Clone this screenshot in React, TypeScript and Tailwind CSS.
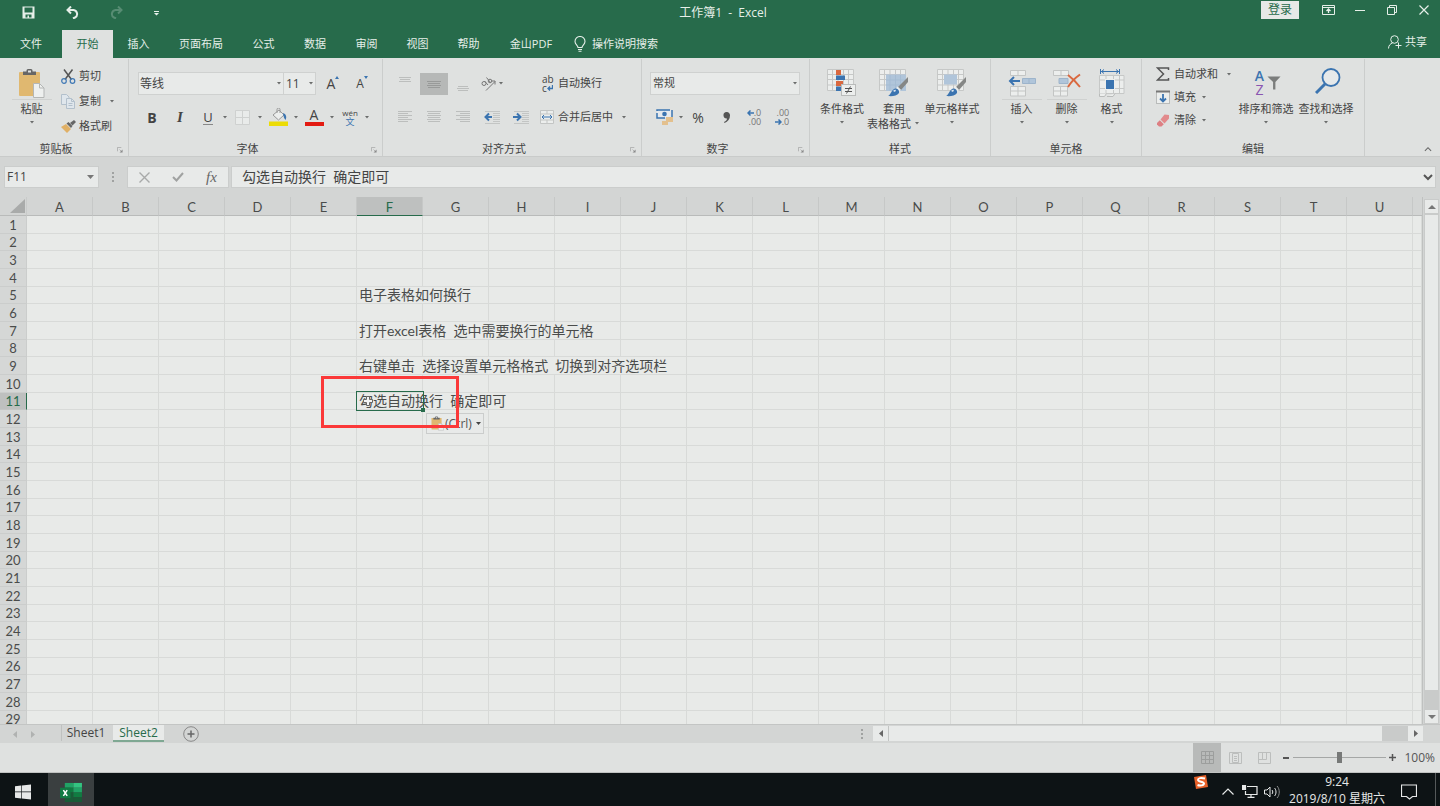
import { useState, type ReactNode } from 'react';
import clsx from 'clsx';

const menuTabs = [
  { label: '文件', width: 'w-[62px]' },
  { label: '开始', width: 'w-[51px]' },
  { label: '插入', width: 'w-[51px]' },
  { label: '页面布局', width: 'w-[74px]' },
  { label: '公式', width: 'w-[51px]' },
  { label: '数据', width: 'w-[52px]' },
  { label: '审阅', width: 'w-[51px]' },
  { label: '视图', width: 'w-[51px]' },
  { label: '帮助', width: 'w-[51px]' },
  { label: '金山PDF', width: 'w-[74px]' },
];

const columns = 'ABCDEFGHIJKLMNOPQRSTU'.split('');
const rows = Array.from({ length: 29 }, (_, i) => i + 1);

// Text runs over the empty neighbours, so each entry says how many columns it covers
const cells: { [key: string]: { text: string; span: number } } = {
  F5: { text: '电子表格如何换行', span: 2 },
  F7: { text: '打开excel表格  选中需要换行的单元格', span: 4 },
  F9: { text: '右键单击  选择设置单元格格式  切换到对齐选项栏', span: 5 },
  F11: { text: '勾选自动换行  确定即可', span: 3 },
};

/* ---------- small shared pieces ---------- */

function Caret({ className = 'w-2' }: { className?: string }) {
  return (
    <span className={clsx('flex shrink-0 justify-center', className)}>
      <svg width="4" height="3" viewBox="0 0 4 3" fill="#6a6c6b">
        <path d="M0 0h4L2 2.4z" />
      </svg>
    </span>
  );
}

function ToolButton({ label, active, children }: { label: string; active?: boolean; children: ReactNode }) {
  return (
    <button
      aria-label={label}
      className={clsx('flex h-[22px] w-7 shrink-0 items-center justify-center', active && 'bg-[#b6b8b7]')}
    >
      {children}
    </button>
  );
}

function TextButton({ icon, label, caret }: { icon: ReactNode; label: string; caret?: string }) {
  return (
    <button className="flex h-[22px] items-center whitespace-nowrap">
      <span className="flex w-[18px] shrink-0">{icon}</span>
      <span>{label}</span>
      {caret && <Caret className={caret} />}
    </button>
  );
}

function BigButton({ icon, lines, width, split, sideCaret }: {
  icon: ReactNode;
  lines: string[];
  width: string;
  split?: boolean;
  sideCaret?: boolean;
}) {
  return (
    <button className={clsx('flex shrink-0 flex-col items-center whitespace-nowrap pt-2', width)}>
      <span className="flex h-8 items-center justify-center">{icon}</span>
      <span className={clsx('mb-px h-px w-10', split && 'bg-[#cfd1d0]')} />
      {lines.map((line, i) => (
        <span key={line} className="flex h-[15px] items-center leading-[15px]">
          {line}
          {sideCaret && i === 1 && <Caret className="ml-[2px] w-2" />}
        </span>
      ))}
      {!sideCaret && <Caret className="mt-[5px] w-2" />}
    </button>
  );
}

function Group({ title, width, launcher, children }: {
  title: string;
  width: string;
  launcher?: boolean;
  children: ReactNode;
}) {
  return (
    <section className={clsx('flex shrink-0 flex-col border-r border-[#cbcdcc]', width)}>
      <div className="flex-1">{children}</div>
      <div className="flex h-[14px] items-center">
        <span className="flex-1 text-center leading-4">{title}</span>
        {launcher && (
          <button aria-label={`${title}设置`} className="flex w-4 justify-center pt-px">
            <svg width="6" height="6" viewBox="0 0 7 7" fill="none" stroke="#aaa">
              <path d="M0.5 5V0.5H5M3 3l2.5 2.5" />
              <path d="M6.5 3v3.5H3z" fill="#888" stroke="none" />
            </svg>
          </button>
        )}
      </div>
    </section>
  );
}

/* ---------- icons ---------- */

function PasteIcon({ size = 27 }: { size?: number }) {
  return (
    <svg width={size} height={size + 2} viewBox="0 0 27 29">
      <rect x="1" y="3" width="21" height="24" rx="1" fill="#e0b870" />
      <path d="M5 2.5h3.5V1.5a1.5 1.5 0 0 1 1.5-1.5h3a1.5 1.5 0 0 1 1.5 1.5v1H18V6H5z" fill="#666" />
      <rect x="10" y="1.5" width="3" height="2" fill="#dfe1e0" />
      <path d="M15.5 14.5h6l4.5 4.5v9.5H15.5z" fill="#eef0ef" stroke="#b4b6b5" />
      <path d="M21.5 14.5V19H26" fill="none" stroke="#b4b6b5" />
    </svg>
  );
}

const scissors = (
  <svg width="15" height="15" viewBox="0 0 15 15" fill="none">
    <path d="M3 0.5l7.5 10M11.5 0.5L4 10.5" stroke="#555" strokeWidth="1.5" />
    <circle cx="3" cy="12" r="2.3" stroke="#4179b5" strokeWidth="1.2" />
    <circle cx="11.5" cy="12" r="2.3" stroke="#4179b5" strokeWidth="1.2" />
  </svg>
);

const copy = (
  <svg width="14" height="15" viewBox="0 0 14 15" fill="#dfe6ec" stroke="#b3c0cc">
    <path d="M0.5 0.5h5l2.5 2.5v7.5h-7.5z" />
    <path d="M5.5 4.5h5l3 3v7h-8z" />
    <path d="M10.5 4.5v3h3M7.5 9.5h4M7.5 11.5h4" fill="none" />
  </svg>
);

const brush = (
  <svg width="15" height="13" viewBox="0 0 15 13">
    <path d="M0 7l5-3 5 5-4 4z" fill="#e0b066" />
    <path d="M5.5 3.5L7.5 2l4 4-1.5 2z" fill="#666" />
    <path d="M9 3l4-3 2 2-3.5 3.5z" fill="#666" />
  </svg>
);

const gridPath = 'M0.5 0.5h26v21h-26zM0.5 5.5h26M0.5 10.5h26M0.5 16h26M5.5 0.5v21M11 0.5v21M16.5 0.5v21M21.5 0.5v21';

const conditional = (
  <svg width="30" height="28" viewBox="0 0 30 28">
    <path d={gridPath} fill="#eceeed" stroke="#c6c8c7" />
    <path d="M9 1h5v5H9zM9 12h7v5H9z" fill="#d9683f" />
    <path d="M9 6.5h9V11H9zM9 17.5h5V22H9z" fill="#3b74b0" />
    <rect x="14.5" y="15.5" width="14" height="11" fill="#eceeed" stroke="#b9bbba" />
    <path d="M18 19.5h7M18 22.5h7M23.5 17.5l-4 7" stroke="#555" fill="none" />
  </svg>
);

function BrushTip() {
  return (
    <>
      <path d="M29 8v5l-7 8-3-3z" fill="#858786" />
      <path d="M18.5 17.5l3.5 3.5-2 1.500-3-3z" fill="#eceeed" />
      <path d="M9 27c3-1 3-6 7-7.5 3 0 4.500 2 4 4.500-2 3-7 3.500-11 3z" fill="#3b74b0" />
      <path d="M14 22c1-1 2-1.500 3-1l-1 2z" fill="#dce6ef" />
    </>
  );
}

const tableStyle = (
  <svg width="30" height="28" viewBox="0 0 30 28">
    <path d={gridPath} fill="#eceeed" stroke="#c6c8c7" />
    <path d="M7 5.5h20V22H7z" fill="#b0c5da" />
    <path d="M7 11h19M7 16h19M11 6v16M16.5 6v16M21.5 6v16" stroke="#a5bcd3" />
    <BrushTip />
  </svg>
);

const cellStyle = (
  <svg width="30" height="28" viewBox="0 0 30 28">
    <path d={gridPath} fill="#eceeed" stroke="#c6c8c7" />
    <path d="M7 5.5h13v10H7z" fill="#b0c5da" />
    <BrushTip />
  </svg>
);

const insertCells = (
  <svg width="28" height="27" viewBox="0 0 28 27">
    <path d="M2.5 0.5h15v5h-15zM10 0.5v5M2.5 16.5h15v9.5h-15zM10 16.5v9.5M2.5 21h15" fill="#eceeed" stroke="#c3c5c4" />
    <path d="M14.5 8.5h13v5h-13zM21 8.5v5" fill="#b0c5da" stroke="#9db4cb" />
    <path d="M12 11H2.5M6 7l-4 4 4 4" fill="none" stroke="#3b74b0" strokeWidth="2" />
  </svg>
);

const deleteCells = (
  <svg width="28" height="27" viewBox="0 0 28 27">
    <path d="M0.5 0.5h15v5h-15zM8 0.5v5M0.5 16.5h14v9.5h-14zM7.5 16.5v9.5M0.5 21h14" fill="#eceeed" stroke="#c3c5c4" />
    <path d="M6 8.5h9v5H6z" fill="#b0c5da" stroke="#9db4cb" />
    <path d="M15 5c4 3 8 7 12 12M27 4.5C22 8 18 12 15 17" fill="none" stroke="#d9683f" strokeWidth="2" />
  </svg>
);

const formatCells = (
  <svg width="26" height="29" viewBox="0 0 26 29">
    <path d="M2 2.5h18M5 0.5L2.500 2.5 5 4.5M17 0.5l2.500 2L17 4.5M1.5 0v5M20.5 0v5" fill="none" stroke="#3b74b0" />
    <path d="M0.5 6.5h24.5v18H0.5zM0.5 11h24.5M0.5 19.5h24.5M7 6.5v18M14.500 6.5v18M20.5 6.5v18" fill="#eceeed" stroke="#c6c8c7" />
    <path d="M0.5 24.5v3h5l2-3M8 27.5h6l2-3" fill="#eceeed" stroke="#b9bbba" />
    <rect x="6" y="10" width="10" height="11" fill="#eceeed" />
    <rect x="7" y="11" width="8" height="9" fill="#3b74b0" />
  </svg>
);

const sortFilter = (
  <span className="flex items-center pl-1">
    <span className="flex flex-col items-center text-[14px] leading-[14px]">
      <span className="font-semibold text-[#3b74b0]">A</span>
      <span className="text-[#8a55b0]">Z</span>
    </span>
    <svg width="14" height="14" viewBox="0 0 15 14" className="ml-[3px]" fill="#7b7d7c">
      <path d="M0.5 0h14L9 6v8H6.5V6z" />
    </svg>
  </span>
);

const magnifier = (
  <svg width="26" height="26" viewBox="0 0 26 26" fill="none" stroke="#3b74b0" className="mb-1 ml-1">
    <circle cx="16" cy="9.5" r="8.5" strokeWidth="1.8" fill="#e6e9ea" />
    <path d="M10 16l-9 9" strokeWidth="3" />
  </svg>
);

// Horizontal strokes two pixels apart, given as [x1, x2] per line
function AlignIcon({ lines, top = 2, color = '#bcbebd' }: { lines: number[][]; top?: number; color?: string }) {
  return (
    <svg width="14" height="14" viewBox="0 0 14 14" stroke={color}>
      {lines.map(([a, b], i) => (
        <path key={i} d={`M${a} ${top + i * 2 - 0.5}H${b}`} />
      ))}
    </svg>
  );
}

function IndentIcon({ right }: { right?: boolean }) {
  return (
    <svg width="17" height="14" viewBox="0 0 17 14" fill="none">
      <path d="M1 1.5h15M9 3.5h7M9 5.5h7M9 7.5h7M9 9.5h7M9 11.500h7M1 13.5h15" stroke="#c3c5c4" />
      <path d={right ? 'M0 7h7M4 3.500l3.500 3.500-3.500 3.500' : 'M8 7H1.500M5 3.500L1.500 7l3.500 3.500'} stroke="#3b74b0" strokeWidth="2" />
    </svg>
  );
}

function DecimalIcon({ more }: { more?: boolean }) {
  return (
    <span className="flex flex-col text-[9px] leading-[9px] text-[#777]">
      <span className="flex items-center justify-end">
        {more ? '.00' : (
          <>
            <svg width="7" height="6" viewBox="0 0 7 6" fill="none" stroke="#3b74b0" strokeWidth="1.5"><path d="M7 3H1M3.5 0.5L1 3l2.500 2.500" /></svg>
            .0
          </>
        )}
      </span>
      <span className="flex items-center justify-end">
        {more ? (
          <>
            <svg width="7" height="6" viewBox="0 0 7 6" fill="none" stroke="#3b74b0" strokeWidth="1.5"><path d="M0 3h6M3.5 0.5L6 3 3.500 5.500" /></svg>
            .0
          </>
        ) : '.00'}
      </span>
    </span>
  );
}

/* ---------- header ---------- */

function TitleBar() {
  return (
    <header className="flex h-[30px] items-start text-[#e6efe9]">
      <div className="flex h-6 flex-1 items-center pl-[6px]">
        <button aria-label="保存" className="flex w-11 justify-center">
          <svg width="13" height="13" viewBox="0 0 13 13" fill="currentColor">
            <path fillRule="evenodd" d="M0.5 0.5h12v12h-12zM2.500 1.500v5h8v-5zM3.500 8.500v3h2v-2h1.500v2h2.500v-3z" />
          </svg>
        </button>
        <button aria-label="撤消" className="flex w-11 justify-center pl-px">
          <svg width="13" height="13" viewBox="0 0 13 13" fill="none" stroke="currentColor" strokeWidth="2">
            <path d="M5 0.5L1.500 4 5 7.500M2 4h5.500a4 4 0 0 1 1.500 7.500L7 12.500" />
          </svg>
        </button>
        <button aria-label="恢复" className="flex w-11 justify-center opacity-25">
          <svg width="13" height="13" viewBox="0 0 13 13" fill="none" stroke="currentColor" strokeWidth="2">
            <path d="M8 0.5L11.500 4 8 7.500M11 4H5.500A4 4 0 0 0 4 11.500l2 1" />
          </svg>
        </button>
        <button aria-label="自定义快速访问工具栏" className="flex w-9 justify-center pt-[2px]">
          <svg width="5" height="5" viewBox="0 0 5 5" fill="currentColor"><path d="M0 0h5v1H0zM0 2h5L2.500 4.500z" /></svg>
        </button>
      </div>
      <h1 className="h-6 whitespace-pre text-[12px] leading-[25px]">工作簿1  -  Excel</h1>
      <div className="flex h-5 flex-1 items-center justify-end">
        <button className="mr-[13px] h-[18px] w-[38px] bg-[#e6e9e7] text-[12px] leading-[18px] text-[#276b4b]">登录</button>
        <button aria-label="功能区显示选项" className="flex w-8 justify-center">
          <svg width="13" height="10" viewBox="0 0 13 10" fill="none" stroke="currentColor">
            <path d="M0.5 0.5h12v9h-12zM0.5 2.500h12" />
            <path d="M6.500 8V4.500M4.500 6l2-2 2 2" strokeWidth="1.300" />
          </svg>
        </button>
        <button aria-label="最小化" className="flex w-8 justify-center">
          <svg width="10" height="1" viewBox="0 0 10 1" fill="currentColor"><path d="M0 0h10v1H0z" /></svg>
        </button>
        <button aria-label="还原" className="flex w-8 justify-center">
          <svg width="10" height="10" viewBox="0 0 10 10" fill="none" stroke="currentColor">
            <path d="M0.5 2.500h7v7h-7zM2.500 2.500v-2h7v7h-2" />
          </svg>
        </button>
        <button aria-label="关闭" className="flex w-8 justify-center">
          <svg width="10" height="10" viewBox="0 0 10 10" fill="none" stroke="currentColor" strokeWidth="1.200">
            <path d="M0.5 0.5l9 9M9.500 0.5l-9 9" />
          </svg>
        </button>
      </div>
    </header>
  );
}

function MenuTabs({ current, onSelect }: { current: string; onSelect: (label: string) => void }) {
  return (
    <nav className="flex h-7 items-center text-[11px] text-[#e6efe9]">
      {menuTabs.map((tab) => (
        <button
          key={tab.label}
          onClick={() => onSelect(tab.label)}
          className={clsx('h-full shrink-0 whitespace-nowrap', tab.width, current === tab.label && 'bg-[#dfe1e0] text-[#276b4b]')}
        >
          {tab.label}
        </button>
      ))}
      <button className="ml-[6px] flex items-center gap-[6px] whitespace-nowrap">
        <svg width="12" height="16" viewBox="0 0 12 16" fill="none" stroke="currentColor" strokeWidth="1.100">
          <path d="M4 11.500c0-2-3-3-3-6a5 5 0 0 1 10 0c0 3-3 4-3 6zM4 13.500h4M4.500 15.300h3" />
        </svg>
        操作说明搜索
      </button>
      <button className="mb-1 ml-auto mr-[13px] flex items-center gap-[3px] whitespace-nowrap">
        <svg width="14" height="14" viewBox="0 0 14 14" fill="none" stroke="currentColor">
          <circle cx="6.500" cy="4.500" r="3.800" />
          <path d="M0.5 13.500c0-3 2-5 4-5.500M10.500 7.500v6M7.500 10.500h6" />
        </svg>
        共享
      </button>
    </nav>
  );
}

/* ---------- ribbon ---------- */

function Ribbon() {
  return (
    <div className="flex h-[99px] overflow-hidden border-b border-[#c9cbca] bg-[#dfe1e0] pt-px text-[11px] text-[#444]">
      <Group title="剪贴板" width="w-[129px]" launcher>
        <div className="flex pl-2">
          <BigButton icon={<PasteIcon />} lines={['粘贴']} width="w-[47px]" split />
          <div className="ml-[6px] flex flex-col gap-[3px] pt-[6px]">
            <TextButton icon={scissors} label="剪切" />
            <TextButton icon={copy} label="复制" caret="ml-[3px] w-4" />
            <TextButton icon={brush} label="格式刷" />
          </div>
        </div>
      </Group>

      <Group title="字体" width="w-[254px]" launcher>
        <div className="mt-[13px] flex h-[23px] items-center pl-[9px]">
          <div className="flex h-full w-[146px] items-center border border-[#cfd1d0] bg-[#e8eae9]">
            <select aria-label="字体" className="h-full min-w-0 flex-1 appearance-none pl-px text-[12px]">
              <option>等线</option>
            </select>
            <Caret />
          </div>
          <div className="flex h-full w-8 items-center border border-l-0 border-[#cfd1d0] bg-[#e8eae9]">
            <select aria-label="字号" className="h-full min-w-0 flex-1 appearance-none pl-[2px] text-[12px]">
              <option>11</option>
            </select>
            <Caret />
          </div>
          <div className="flex gap-px pl-[3px]">
            <ToolButton label="增大字号">
              <span className="text-[14px]">A</span>
              <svg width="4" height="3" viewBox="0 0 4 3" className="mb-3" fill="#3b74b0"><path d="M2 0l2 3H0z" /></svg>
            </ToolButton>
            <ToolButton label="减小字号">
              <span className="text-[12px]">A</span>
              <svg width="4" height="3" viewBox="0 0 4 3" className="mb-3" fill="#3b74b0"><path d="M0 0h4L2 3z" /></svg>
            </ToolButton>
          </div>
        </div>
        <div className="mt-[11px] flex items-center pl-[9px]">
          <ToolButton label="加粗"><span className="text-[14px] font-bold">B</span></ToolButton>
          <ToolButton label="倾斜"><span className="font-['Liberation_Serif',serif] text-[15px] font-bold italic">I</span></ToolButton>
          <ToolButton label="下划线"><span className="border-b border-[#888] text-[13px] leading-[14px]">U</span></ToolButton>
          <Caret className="w-[6px]" />
          <ToolButton label="边框">
            <svg width="15" height="15" viewBox="0 0 15 15" fill="#e9ebea" stroke="#cfd1d0">
              <path d="M0.5 0.5h14v14h-14zM7.500 0.5v14M0.5 7.500h14" />
            </svg>
          </ToolButton>
          <Caret />
          <ToolButton label="填充颜色">
            <svg width="19" height="18" viewBox="0 0 19 18">
              <path d="M4 7l6-5 5 5-5.500 5z" fill="#eceeed" stroke="#999" />
              <path d="M8 5V1.500a1.500 1.500 0 0 1 3 0V5" fill="none" stroke="#999" />
              <path d="M14 5c3 1 4 4 2.500 7-1-1-2-3-2.500-7z" fill="#3b74b0" />
              <rect y="13.500" width="19" height="4.500" fill="#ecdc06" />
            </svg>
          </ToolButton>
          <Caret />
          <ToolButton label="字体颜色">
            <span className="flex w-[19px] flex-col items-center border-b-4 border-[#e31b12] text-[14px] leading-[14px]">A</span>
          </ToolButton>
          <Caret />
          <ToolButton label="拼音指南">
            <span className="flex flex-col items-center text-[8px] leading-[8px]">
              <span>wén</span>
              <span className="text-[9px] leading-[9px] text-[#3b74b0]">文</span>
            </span>
          </ToolButton>
          <Caret className="w-[6px]" />
        </div>
      </Group>

      <Group title="对齐方式" width="w-[259px]" launcher>
        <div className="mt-[13px] flex h-[23px] items-center gap-px pl-2">
          <ToolButton label="顶端对齐"><AlignIcon lines={[[1, 13], [2, 12], [1, 13]]} top={1} /></ToolButton>
          <ToolButton label="垂直居中" active><AlignIcon lines={[[0, 14], [1, 13], [0, 14], [1, 13]]} top={5} color="#989a99" /></ToolButton>
          <ToolButton label="底端对齐"><AlignIcon lines={[[2, 12], [1, 13], [2, 12]]} top={10} /></ToolButton>
          <button aria-label="方向" className="flex h-[22px] w-7 items-center justify-center">
            <svg width="15" height="14" viewBox="0 0 15 14" fill="none" stroke="#777">
              <path d="M5 13.500l9-9M10.500 4H14v3.500" />
              <circle cx="3" cy="6.500" r="2" />
              <path d="M3.500 4l3.500 4M5.500 0.5l4 5" />
              <circle cx="9" cy="4" r="1.800" />
            </svg>
            <Caret className="ml-[3px] w-[5px]" />
          </button>
          <div className="ml-[33px]">
            <TextButton
              icon={
                <span className="flex flex-col pl-[2px] text-[10px] leading-[9px]">
                  ab
                  <span className="flex items-center">
                    c
                    <svg width="6" height="6" viewBox="0 0 6 6" fill="none" stroke="#3b74b0" strokeWidth="1.300"><path d="M5.500 0v3.500H1M3 1.500l-2 2 2 2" /></svg>
                  </span>
                </span>
              }
              label="自动换行"
            />
          </div>
        </div>
        <div className="mt-[11px] flex items-center gap-px pl-2">
          <ToolButton label="左对齐"><AlignIcon lines={[[0, 14], [0, 10], [0, 14], [0, 10], [0, 14], [0, 10]]} /></ToolButton>
          <ToolButton label="居中"><AlignIcon lines={[[0, 14], [1, 13], [0, 14], [1, 13], [0, 14], [1, 13]]} /></ToolButton>
          <ToolButton label="右对齐"><AlignIcon lines={[[0, 14], [4, 14], [0, 14], [4, 14], [0, 14], [4, 14]]} /></ToolButton>
          <ToolButton label="减少缩进量"><IndentIcon /></ToolButton>
          <ToolButton label="增加缩进量"><IndentIcon right /></ToolButton>
          <div className="ml-1">
            <TextButton
              icon={
                <svg width="14" height="14" viewBox="0 0 14 14" fill="#eceeed" stroke="#c3c5c4">
                  <path d="M0.5 0.5h13v13h-13zM0.5 4h13M0.5 10h13M7 0.5V4M7 10v3.500" />
                  <path d="M2 7h10M4 5L2 7l2 2M10 5l2 2-2 2" fill="none" stroke="#3b74b0" />
                </svg>
              }
              label="合并后居中"
              caret="ml-[7px] w-2"
            />
          </div>
        </div>
      </Group>

      <Group title="数字" width="w-[168px]" launcher>
        <div className="mt-[13px] h-[23px] pl-2 pr-[9px]">
          <div className="flex h-full items-center border border-[#cfd1d0] bg-[#e8eae9]">
            <select aria-label="数字格式" className="h-full min-w-0 flex-1 appearance-none pl-[2px] text-[11px]">
              <option>常规</option>
            </select>
            <Caret />
          </div>
        </div>
        <div className="mt-[11px] flex items-center pl-2">
          <ToolButton label="会计数字格式">
            <svg width="17" height="16" viewBox="0 0 17 16">
              <path d="M1 1h15v8H1z" fill="#e6eaee" stroke="#3b74b0" strokeWidth="1.500" strokeDasharray="13 2" />
              <circle cx="8.500" cy="5" r="2.300" fill="#3b74b0" />
              <path d="M10 8h7v5h-5v3H6v-4h4z" fill="#e3c08e" />
            </svg>
          </ToolButton>
          <Caret className="w-[6px]" />
          <ToolButton label="百分比样式"><span className="text-[14px]">%</span></ToolButton>
          <ToolButton label="千位分隔样式">
            <svg width="7" height="11" viewBox="0 0 7 11" fill="#555"><path d="M3.500 0A3.300 3.300 0 0 1 7 3.500C7 7 5 9.500 1.500 11L1 10c2-1 3-2 3-3.500A3.200 3.200 0 1 1 3.500 0z" /></svg>
          </ToolButton>
          <ToolButton label="增加小数位数"><DecimalIcon /></ToolButton>
          <ToolButton label="减少小数位数"><DecimalIcon more /></ToolButton>
        </div>
      </Group>

      <Group title="样式" width="w-[181px]">
        <div className="flex pl-[6px]">
          <BigButton icon={conditional} lines={['条件格式']} width="w-[52px]" />
          <BigButton icon={tableStyle} lines={['套用', '表格格式']} width="w-[52px]" sideCaret />
          <BigButton icon={cellStyle} lines={['单元格样式']} width="w-16" />
        </div>
      </Group>

      <Group title="单元格" width="w-[151px]">
        <div className="flex pl-2">
          <BigButton icon={insertCells} lines={['插入']} width="w-[45px]" split />
          <BigButton icon={deleteCells} lines={['删除']} width="w-[45px]" split />
          <BigButton icon={formatCells} lines={['格式']} width="w-[45px]" />
        </div>
      </Group>

      <Group title="编辑" width="w-[223px]">
        <div className="flex pl-[14px]">
          <div className="flex w-20 flex-col gap-px pt-1">
            <TextButton
              icon={<svg width="14" height="14" viewBox="0 0 14 14" fill="none" stroke="#555" strokeWidth="1.500"><path d="M12.500 3V1H1.500l6 6-6 6h11v-2" /></svg>}
              label="自动求和"
              caret="ml-[7px] w-2"
            />
            <TextButton
              icon={
                <svg width="14" height="14" viewBox="0 0 14 14" fill="none">
                  <rect x="0.5" y="1.500" width="13" height="12" fill="#eceeed" stroke="#b9bbba" />
                  <path d="M0 0.500h14v2H0z" fill="#777" />
                  <path d="M7 4v7M4 8.500L7 11.500l3-3" stroke="#3b74b0" strokeWidth="1.800" />
                </svg>
              }
              label="填充"
              caret="ml-[4px] w-2"
            />
            <TextButton
              icon={
                <svg width="14" height="13" viewBox="0 0 14 13">
                  <path d="M8.500 0.500l4.500 0.500v3.500l-4.500 5-4-4z" fill="#e28a8c" />
                  <path d="M3.800 6.200l4 4L5.500 12.500H3L1 10.500V9z" fill="#dd7f83" />
                </svg>
              }
              label="清除"
              caret="ml-[4px] w-2"
            />
          </div>
          <BigButton icon={sortFilter} lines={['排序和筛选']} width="w-[60px]" />
          <BigButton icon={magnifier} lines={['查找和选择']} width="w-[60px]" />
        </div>
      </Group>

      <div className="flex flex-1 items-end justify-end pb-1 pr-2">
        <button aria-label="折叠功能区">
          <svg width="8" height="6" viewBox="0 0 9 6" fill="none" stroke="#666" strokeWidth="1.200"><path d="M1 5l3.500-3.500L8 5" /></svg>
        </button>
      </div>
    </div>
  );
}

function FormulaBar() {
  return (
    <div className="flex h-10 items-center pl-1 pr-1 text-[#444]">
      <div className="flex h-[22px] w-[95px] items-center border border-[#cbcdcc] bg-[#e8eae9] pr-1">
        <input aria-label="名称框" defaultValue="F11" className="min-w-0 flex-1 pl-[2px] text-[12px] outline-none" />
        <svg width="7" height="4" viewBox="0 0 7 4" fill="#777"><path d="M0 0h7L3.500 4z" /></svg>
      </div>
      <svg width="2" height="10" viewBox="0 0 2 10" className="mx-[13px]" fill="#a0a2a1">
        <path d="M0 0h2v2H0zM0 4h2v2H0zM0 8h2v2H0z" />
      </svg>
      <div className="flex h-[22px] items-center border border-[#cbcdcc] bg-[#e8eae9]">
        <button aria-label="取消" className="flex w-[33px] justify-center">
          <svg width="11" height="11" viewBox="0 0 11 11" stroke="#a8aaa9" strokeWidth="1.400"><path d="M0.5 0.5l10 10M10.500 0.5l-10 10" /></svg>
        </button>
        <button aria-label="输入" className="flex w-[34px] justify-center">
          <svg width="12" height="10" viewBox="0 0 12 10" fill="none" stroke="#a0a2a1" strokeWidth="2"><path d="M1 5l3.500 3.500L11 1" /></svg>
        </button>
        <button aria-label="插入函数" className="w-[33px] text-center font-['Liberation_Serif',serif] text-[15px] italic leading-5 text-[#666]">fx</button>
      </div>
      <div className="ml-[2px] flex h-[22px] flex-1 items-center border border-[#cbcdcc] bg-[#e8eae9] pr-[2px]">
        <input aria-label="编辑栏" defaultValue="勾选自动换行  确定即可" className="min-w-0 flex-1 pl-[10px] font-['Lato','Noto_Sans_CJK_SC',sans-serif] text-[14px] leading-5 outline-none" />
        <button aria-label="展开编辑栏">
          <svg width="10" height="7" viewBox="0 0 10 7" fill="none" stroke="#555" strokeWidth="2"><path d="M1 1l4 4 4-4" /></svg>
        </button>
      </div>
    </div>
  );
}

/* ---------- sheet ---------- */

function Selection() {
  return (
    <>
      <span className="absolute -left-px -top-[2px] h-5 w-[68px] border border-[#276b4b]">
        <span className="absolute -bottom-[2px] -right-[2px] size-1 bg-[#276b4b]" />
      </span>
      <svg width="14" height="14" viewBox="0 0 14 14" className="absolute left-1 top-px" fill="#f4f5f4" stroke="#666">
        <path d="M5.500 2.500h3v3h3v3h-3v3h-3v-3h-3v-3h3z" />
      </svg>
      <button className="absolute left-[69px] top-5 flex h-[21px] w-[58px] items-center border border-[#cbcdcc] bg-[#e8eae9] pl-1 font-['Open_Sans',sans-serif] text-[12px] text-[#555]">
        <PasteIcon size={13} />
        <span className="ml-px">(Ctrl)</span>
        <svg width="5" height="3" viewBox="0 0 5 3" className="ml-1" fill="#444"><path d="M0 0h5L2.500 3z" /></svg>
      </button>
      {/* callout around the selected cell */}
      <span className="absolute -left-9 -top-[17px] h-[52px] w-[138px] border-3 border-[#fb3939]" />
    </>
  );
}

function SheetRow({ row }: { row: number }) {
  const out: ReactNode[] = [];
  for (let c = 0; c <= columns.length; ) {
    const key = `${columns[c] ?? 'V'}${row}`;
    const cell = cells[key];
    out.push(
      <td
        key={key}
        colSpan={cell?.span}
        className={clsx('whitespace-pre border-b border-r border-[#d8dad8] p-0 pl-[2px] text-[14px] leading-4', key === 'F11' && 'relative')}
      >
        {cell?.text}
        {key === 'F11' && <Selection />}
      </td>,
    );
    c += cell ? cell.span : 1;
  }

  return (
    <tr className={row % 3 === 2 ? 'h-[17px]' : 'h-[18px]'}>
      <th
        scope="row"
        className={clsx(
          'border-b border-r p-0 text-[13px] font-normal leading-4',
          row === 11 ? 'border-b-[#c3c5c4] border-r-[#276b4b] bg-[#bec0bf] text-[#276b4b]' : 'border-[#cbcdcc] bg-[#d5d7d6]',
        )}
      >
        {row}
      </th>
      {out}
    </tr>
  );
}

function Sheet() {
  return (
    <main className="flex min-h-0 flex-1">
      <div className="min-w-0 flex-1 overflow-hidden bg-[#e8eae8]">
        <table className="w-full table-fixed border-separate border-spacing-0 font-['Lato','Noto_Sans_CJK_SC',sans-serif] text-[#4a4c4b]">
          <colgroup>
            <col className="w-[27px]" />
            {columns.map((c) => <col key={c} className="w-[66px]" />)}
            <col />
          </colgroup>
          <thead>
            <tr className="h-[19px]">
              <th aria-label="全选" className="border-b border-r border-[#b9bbba] border-r-[#c9cbca] bg-[#d3d5d4] p-0">
                <svg width="15" height="14" viewBox="0 0 15 14" className="ml-[10px]" fill="#a9abaa"><path d="M15 0v14H0z" /></svg>
              </th>
              {columns.map((c) => (
                <th
                  key={c}
                  scope="col"
                  className={clsx(
                    'border-b border-r border-r-[#c6c8c7] p-0 pt-[2px] text-[13px] font-normal leading-4',
                    c === 'F' ? 'border-b-[#276b4b] bg-[#bec0bf] text-[#276b4b]' : 'border-b-[#b9bbba] bg-[#d3d5d4]',
                  )}
                >
                  {c}
                </th>
              ))}
              <th className="border-b border-[#b9bbba] bg-[#d3d5d4] p-0" />
            </tr>
          </thead>
          <tbody>
            {rows.map((row) => <SheetRow key={row} row={row} />)}
          </tbody>
        </table>
      </div>

      <div className="flex w-[18px] flex-col items-center border-l border-[#bfc1c0] pt-[2px]">
        <button aria-label="向上滚动" className="flex h-[15px] w-[15px] items-center justify-center border border-[#c9cbca] bg-[#e8eae9]">
          <svg width="8" height="4" viewBox="0 0 8 4" fill="#777"><path d="M4 0l4 4H0z" /></svg>
        </button>
        <div className="flex w-[15px] flex-1 flex-col bg-[#c9cbca] pb-[18px]">
          <div className="flex-1 border border-[#c9cbca] bg-[#e8eae9]" />
        </div>
        <button aria-label="向下滚动" className="flex h-[15px] w-[15px] items-center justify-center border border-[#c9cbca] bg-[#e8eae9]">
          <svg width="8" height="4" viewBox="0 0 8 4" fill="#777"><path d="M0 0h8L4 4z" /></svg>
        </button>
      </div>
    </main>
  );
}

function SheetTabs() {
  return (
    <div className="flex h-[19px] items-start border-t border-[#c3c5c4] text-[#444]">
      <div className="flex h-[18px] w-[61px] items-center gap-[14px] pl-[13px]">
        <svg width="4" height="7" viewBox="0 0 4 7" fill="#b0b2b1"><path d="M4 0v7L0 3.500z" /></svg>
        <svg width="4" height="7" viewBox="0 0 4 7" fill="#b0b2b1"><path d="M0 0l4 3.500L0 7z" /></svg>
      </div>
      <button className="h-4 w-[52px] border-l border-[#bfc1c0] pr-[3px] text-[12px] leading-4">Sheet1</button>
      <button className="h-[17px] w-[51px] border-b-2 border-[#7fa893] bg-[#e8eae9] text-[12px] leading-4 text-[#276b4b]">Sheet2</button>
      <button aria-label="新工作表" className="ml-[19px] mt-px">
        <svg width="16" height="16" viewBox="0 0 16 16" fill="none" stroke="#888">
          <circle cx="8" cy="8" r="7.300" />
          <path d="M8 4.500v7M4.500 8h7" stroke="#666" strokeWidth="1.500" />
        </svg>
      </button>
      <svg width="2" height="10" viewBox="0 0 2 10" className="ml-auto mr-[10px] mt-1" fill="#a0a2a1">
        <path d="M0 0h2v2H0zM0 4h2v2H0zM0 8h2v2H0z" />
      </svg>
      <div className="mr-[17px] mt-px flex h-[15px] w-[550px] min-w-0">
        <button aria-label="向左滚动" className="flex w-4 shrink-0 items-center justify-center border-r border-[#c3c5c4] bg-[#e8eae9]">
          <svg width="4" height="7" viewBox="0 0 4 7" fill="#666"><path d="M4 0v7L0 3.500z" /></svg>
        </button>
        <div className="flex-1 bg-[#c9cbca] pr-[26px]">
          <div className="h-full bg-[#e8eae9]" />
        </div>
        <button aria-label="向右滚动" className="flex w-[15px] shrink-0 items-center justify-center bg-[#e8eae9]">
          <svg width="4" height="7" viewBox="0 0 4 7" fill="#666"><path d="M0 0l4 3.500L0 7z" /></svg>
        </button>
      </div>
    </div>
  );
}

function StatusBar() {
  const [zoom, setZoom] = useState(50);

  return (
    <div className="flex h-[30px] items-center justify-end border-b border-[#c0c2c1] bg-[#dfe1e0] pr-[5px] text-[12px] text-[#555]">
      <button aria-label="普通" className="flex h-full w-7 items-center justify-center bg-[#b8bab9]">
        <svg width="13" height="13" viewBox="0 0 13 13" fill="none" stroke="#9c9e9d"><path d="M0.5 0.5h12v12h-12zM0.5 4.500h12M0.5 8.500h12M4.500 0.5v12M8.500 0.5v12" /></svg>
      </button>
      <button aria-label="页面布局" className="flex h-full w-[29px] items-center justify-center">
        <svg width="13" height="12" viewBox="0 0 13 12" fill="none" stroke="#bcbebd"><path d="M0.5 0.5h12v11h-12zM3.500 1.500h6v9h-6zM5 4.500h3M5 6.500h3M5 8.500h3" /></svg>
      </button>
      <button aria-label="分页预览" className="flex h-full w-7 items-center justify-center">
        <svg width="13" height="12" viewBox="0 0 13 12" fill="none" stroke="#bcbebd"><path d="M0.5 0.5h12v11h-12zM0.5 7.500h8v-7M4.500 0.5v7" /></svg>
      </button>
      <button aria-label="缩小" className="ml-px flex w-[14px] justify-center">
        <svg width="6" height="2" viewBox="0 0 6 2" fill="#555"><path d="M0 0h6v2H0z" /></svg>
      </button>
      <input
        type="range"
        aria-label="显示比例"
        value={zoom}
        onChange={(e) => setZoom(Number(e.target.value))}
        className="mr-[2px] h-3 w-[93px] appearance-none bg-transparent [&::-webkit-slider-runnable-track]:h-px [&::-webkit-slider-runnable-track]:bg-[#a5a7a6] [&::-webkit-slider-thumb]:-mt-[5px] [&::-webkit-slider-thumb]:h-[11px] [&::-webkit-slider-thumb]:w-[5px] [&::-webkit-slider-thumb]:appearance-none [&::-webkit-slider-thumb]:bg-[#777978]"
      />
      <button aria-label="放大" className="flex w-2 justify-center">
        <svg width="7" height="7" viewBox="0 0 7 7" stroke="#555" strokeWidth="1.500"><path d="M3.500 0v7M0 3.500h7" /></svg>
      </button>
      <span className="w-[39px] text-right">100%</span>
    </div>
  );
}

function Taskbar() {
  return (
    <footer className="flex h-[33px] overflow-hidden bg-[#0d1315] text-[#e6e8e8]">
      <button aria-label="开始" className="flex w-12 items-center justify-center pr-[2px] pt-1">
        <svg width="16" height="16" viewBox="0 0 17 16" fill="currentColor">
          <path d="M0 2l6.500-1v6.500H0zM7.200 1L17 0v7.500H7.200zM0 8.200h6.500V15L0 14zM7.200 8.200H17V16l-9.800-1z" />
        </svg>
      </button>
      <button aria-label="Excel" className="flex w-[46px] items-center justify-center bg-[#3a3f40] pt-1">
        <svg width="22" height="20" viewBox="0 0 23 21">
          <path d="M5 1h9v5H5z" fill="#21a366" />
          <path d="M14 1h9v5h-9z" fill="#33c481" />
          <path d="M5 6h9v5H5z" fill="#107c41" />
          <path d="M14 6h9v5h-9z" fill="#21a366" />
          <path d="M5 11h9v10H5z" fill="#185c37" />
          <path d="M14 11h9v5h-9z" fill="#107c41" />
          <path d="M14 16h9v5h-9z" fill="#185c37" />
          <path d="M0 6h11v11H0z" fill="#117a43" />
          <path d="M3.500 8.500l4 6M7.500 8.500l-4 6" stroke="#fff" strokeWidth="1.600" />
        </svg>
      </button>
      <div className="ml-auto flex items-center pt-1">
        <svg width="16" height="16" viewBox="0 0 16 16" className="mb-5">
          <path d="M1 3l12-2 2 12-12 2z" fill="#e8622a" />
          <path d="M12 4.500C8 3.500 5 4 5 6c0 2 6 1.500 6 3.500S7 12 4.500 11" fill="none" stroke="#fff" strokeWidth="2" />
        </svg>
        <button aria-label="显示隐藏的图标" className="ml-[11px] flex w-4 justify-center">
          <svg width="12" height="7" viewBox="0 0 12 7" fill="none" stroke="currentColor" strokeWidth="1.200"><path d="M0.5 6.500L6 1l5.500 5.500" /></svg>
        </button>
        <svg width="16" height="13" viewBox="0 0 16 13" className="ml-[6px]" fill="none" stroke="currentColor" strokeWidth="1.200">
          <path d="M5 1.500h10v8H3.500V6M9 10v2M5.500 12.300h7" />
          <path d="M0.5 0.5h3v4h-3z" fill="currentColor" />
        </svg>
        <svg width="16" height="14" viewBox="0 0 16 14" className="ml-[6px]" fill="none" stroke="currentColor">
          <path d="M0.5 5H3l3-3v10L3 9H0.500zM8 5c1 1 1 3 0 4M10.500 3c2 2 2 6 0 8" />
          <path d="M13 1c3 3 3 9 0 12" stroke="#8a8c8c" />
        </svg>
      </div>
      <div className="ml-2 flex w-[98px] shrink-0 flex-col items-center whitespace-nowrap text-[12px] leading-[17px]">
        <span>9:24</span>
        <span>2019/8/10 星期六</span>
      </div>
      <button aria-label="通知" className="ml-[15px] flex items-center pt-1">
        <svg width="16" height="16" viewBox="0 0 16 16" fill="none" stroke="currentColor" strokeWidth="1.200"><path d="M0.5 1h15v11.500h-4L8.500 15l-3-2.500h-5z" /></svg>
      </button>
      <span className="ml-[18px] mr-1 w-px bg-[#55595a]" />
    </footer>
  );
}

export default function App() {
  const [tab, setTab] = useState('开始');

  return (
    <div className="flex h-screen flex-col overflow-hidden bg-[#d3d5d4] font-['Open_Sans','Noto_Sans_CJK_SC',sans-serif]">
      <div className="bg-[#276b4b]">
        <TitleBar />
        <MenuTabs current={tab} onSelect={setTab} />
      </div>
      <Ribbon />
      <FormulaBar />
      <Sheet />
      <SheetTabs />
      <StatusBar />
      <Taskbar />
    </div>
  );
}
